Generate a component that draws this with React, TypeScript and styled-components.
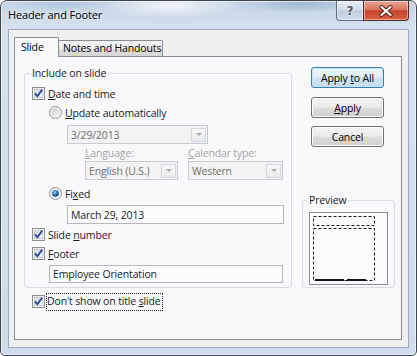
import React, { useId } from "react";
import styled, { createGlobalStyle } from "styled-components";

const FONT = `"Open Sans", "Noto Sans", "DejaVu Sans", sans-serif`;

const GlobalStyle = createGlobalStyle`
  html, body { margin: 0; padding: 0; background: #ffffff; }
  #root { width: 417px; height: 356px; }
  *, *::before, *::after { box-sizing: border-box; }
`;

const Window = styled.div`
  width: 417px;
  height: 356px;
  display: flex;
  flex-direction: column;
  padding: 0 7px 7px;
  border: 1px solid #3f454c;
  border-radius: 7px 7px 5px 5px;
  overflow: hidden;
  font-family: ${FONT};
  font-size: 10.5px;
  letter-spacing: -0.15px;
  color: #1b1b1b;
  background:
    radial-gradient(ellipse 70px 12px at 170px 5px, rgba(255,255,255,0.75), rgba(255,255,255,0)),
    radial-gradient(ellipse 60px 9px at 300px 3px, rgba(120,148,182,0.45), rgba(120,148,182,0)),
    radial-gradient(ellipse 50px 10px at 60px 2px, rgba(150,175,205,0.4), rgba(150,175,205,0)),
    linear-gradient(180deg, #c4d4e5 0px, #d5e1ee 28px, #cfdceb 100%);
  box-shadow: inset 0 0 0 1px rgba(255,255,255,0.55);
`;

const TitleBar = styled.div`
  height: 28px;
  flex: none;
  display: flex;
  align-items: flex-start;
`;

const Title = styled.div`
  flex: 1;
  line-height: 28px;
  font-size: 11px;
  color: #000;
  text-shadow: 0 0 6px rgba(255,255,255,0.9);
`;

const CaptionGroup = styled.div`
  display: flex;
`;

const CaptionButton = styled.div<{ $variant: "help" | "close" }>`
  height: 20px;
  width: ${(p) => (p.$variant === "help" ? "27px" : "46px")};
  display: flex;
  align-items: center;
  justify-content: center;
  border: 1px solid ${(p) => (p.$variant === "help" ? "#5f6f82" : "#5a2820")};
  border-top: none;
  ${(p) => (p.$variant === "help" ? "border-right: none;" : "")}
  border-radius: ${(p) => (p.$variant === "help" ? "0 0 0 4px" : "0 0 4px 0")};
  background: ${(p) =>
    p.$variant === "help"
      ? "linear-gradient(180deg, #e6edf5 0%, #d0dbe7 48%, #bccbdc 52%, #d2dfeb 100%)"
      : "linear-gradient(180deg, #eba796 0%, #d9725e 46%, #c4432d 52%, #d8613f 100%)"};
  box-shadow: inset 0 0 0 1px rgba(255,255,255,0.45);
`;

const HelpGlyph = styled.span`
  font-family: "DejaVu Sans", sans-serif;
  font-weight: bold;
  font-size: 12px;
  line-height: 1;
  color: #4b5566;
  text-shadow: 0 0 2px #fff, 0 0 1px #fff;
`;

const Client = styled.div`
  flex: 1;
  display: flex;
  flex-direction: column;
  border: 1px solid #9aabbd;
  background: #f0f0f0;
  padding: 7px 6px 7px 5px;
`;

const TabRow = styled.div`
  height: 19px;
  flex: none;
  display: flex;
  align-items: flex-end;
`;

const Tab = styled.div<{ $active?: boolean; $width: number }>`
  position: relative;
  width: ${(p) => p.$width}px;
  height: ${(p) => (p.$active ? 20 : 16)}px;
  margin-bottom: ${(p) => (p.$active ? -1 : 0)}px;
  margin-left: ${(p) => (p.$active ? 0 : -1)}px;
  z-index: ${(p) => (p.$active ? 1 : 0)};
  padding-left: ${(p) => (p.$active ? 6 : 4)}px;
  line-height: ${(p) => (p.$active ? 19 : 15)}px;
  white-space: nowrap;
  border: 1px solid #898c95;
  border-bottom: none;
  border-radius: 2px 2px 0 0;
  color: #000;
  background: ${(p) =>
    p.$active ? "#f9f9fb" : "linear-gradient(180deg, #f3f3f3 0%, #ebebeb 50%, #dedede 52%, #d6d6d6 100%)"};
`;

const Panel = styled.div`
  flex: 1;
  display: grid;
  grid-template-columns: 268px 93px;
  column-gap: 10px;
  align-items: start;
  padding: 9px 0 0 9px;
  border: 1px solid #898c95;
  background: #f9f9fb;
`;

const LeftColumn = styled.div`
  display: flex;
  flex-direction: column;
`;

const RightColumn = styled.div`
  display: flex;
  flex-direction: column;
  padding-top: 1px;
`;

const Group = styled.fieldset`
  margin: 0;
  padding: 0;
  min-width: 0;
  border: 1px solid #d5dee6;
  border-radius: 3px;
`;

const GroupLegend = styled.legend<{ $offset: number }>`
  margin-left: ${(p) => p.$offset}px;
  padding: 0 2px;
  line-height: 15px;
  color: #1b1b1b;
`;

const GroupBody = styled.div<{ $pad: string }>`
  display: flex;
  flex-direction: column;
  padding: ${(p) => p.$pad};
`;

const OptionRow = styled.div<{ $indent?: number; $top?: number }>`
  display: flex;
  align-items: center;
  height: 19px;
  margin-left: ${(p) => p.$indent ?? 0}px;
  margin-top: ${(p) => p.$top ?? 0}px;
  gap: 3px;
  color: #1b1b1b;
  white-space: nowrap;
`;

const FocusText = styled.span`
  outline: 1px dotted #222;
  outline-offset: 0;
  padding: 0 1px 1px 0;
  margin-left: -1px;
  line-height: 15px;
`;

const FieldLabels = styled.div`
  display: flex;
  height: 17px;
  align-items: center;
  margin-left: 53px;
  color: #a3a3a3;
`;

const FieldLabel = styled.span<{ $width: number }>`
  width: ${(p) => p.$width}px;
  white-space: nowrap;
`;

const ComboRow = styled.div`
  display: flex;
  gap: 10px;
  margin-left: 53px;
`;

const Combo = styled.div<{ $width: number; $indent?: number; $top?: number }>`
  width: ${(p) => p.$width}px;
  height: 19px;
  margin-left: ${(p) => p.$indent ?? 0}px;
  margin-top: ${(p) => p.$top ?? 0}px;
  display: flex;
  align-items: center;
  padding-left: 3px;
  border: 1px solid #c4cbd4;
  background: #f3f3f4;
  color: #6f6f6f;
  white-space: nowrap;
`;

const DropButton = styled.div`
  margin-left: auto;
  margin-right: 1px;
  width: 15px;
  height: 14px;
  display: flex;
  align-items: center;
  justify-content: center;
  border: 1px solid #d2d7de;
  background: linear-gradient(180deg, #f7f7f7, #ebebeb);
`;

const Triangle = styled.span`
  width: 0;
  height: 0;
  border-left: 3px solid transparent;
  border-right: 3px solid transparent;
  border-top: 3px solid #a9a9a9;
`;

const TextBox = styled.div<{ $width: number; $indent: number; $top: number; $height?: number }>`
  width: ${(p) => p.$width}px;
  height: ${(p) => p.$height ?? 19}px;
  margin-left: ${(p) => p.$indent}px;
  margin-top: ${(p) => p.$top}px;
  display: flex;
  align-items: center;
  padding-left: 3px;
  border: 1px solid #b4b8be;
  background: #fcfcfd;
  color: #1b1b1b;
  white-space: nowrap;
`;

const PushButton = styled.button<{ $default?: boolean; $top: number }>`
  width: 73px;
  height: 21px;
  margin: ${(p) => p.$top}px 0 0 9px;
  padding: 0;
  font-family: ${FONT};
  font-size: 10.5px;
  letter-spacing: -0.15px;
  color: #000;
  border: 1px solid ${(p) => (p.$default ? "#3c7fb1" : "#707070")};
  border-radius: 3px;
  background: ${(p) =>
    p.$default
      ? "linear-gradient(180deg, #eef6fc 0%, #e2eef8 48%, #d0e4f3 52%, #c4dcef 100%)"
      : "linear-gradient(180deg, #f3f3f3 0%, #ebebeb 48%, #dddddd 52%, #cfcfcf 100%)"};
  box-shadow: inset 0 0 0 1px ${(p) => (p.$default ? "#bfe6fb" : "#fbfbfb")};
`;

const PreviewGroup = styled(Group)`
  margin-top: 46px;
`;

const SlideBox = styled.div`
  width: 79px;
  height: 73px;
  border: 1px solid #8a8a8a;
  background: #fbfbfe;
`;

function CheckBox() {
  const id = useId().replace(/:/g, "");
  return (
    <svg width="13" height="13" viewBox="0 0 13 13" style={{ flex: "none" }}>
      <defs>
        <linearGradient id={`cb${id}`} x1="0" y1="0" x2="1" y2="1">
          <stop offset="0" stopColor="#d6d8dc" />
          <stop offset="1" stopColor="#fafafa" />
        </linearGradient>
      </defs>
      <rect x="0.5" y="0.5" width="12" height="12" fill="#f5f5f5" stroke="#8e8f8f" />
      <rect x="2.5" y="2.5" width="8" height="8" fill={`url(#cb${id})`} stroke="#c9ccd1" />
      <path d="M3 6.3 L5.4 9.3 L10.2 2.6" fill="none" stroke="#2b4ea4" strokeWidth="1.9" />
    </svg>
  );
}

function Radio({ checked }: { checked?: boolean }) {
  const id = useId().replace(/:/g, "");
  return (
    <svg width="13" height="13" viewBox="0 0 13 13" style={{ flex: "none" }}>
      <defs>
        <linearGradient id={`ro${id}`} x1="0" y1="0" x2="1" y2="1">
          <stop offset="0" stopColor="#c9cbcf" />
          <stop offset="1" stopColor="#f8f8f8" />
        </linearGradient>
        <radialGradient id={`rd${id}`} cx="0.4" cy="0.35" r="0.7">
          <stop offset="0" stopColor="#9fd8ff" />
          <stop offset="0.45" stopColor="#2d7fc4" />
          <stop offset="1" stopColor="#0f2c52" />
        </radialGradient>
      </defs>
      <circle cx="6.5" cy="6.5" r="6" fill="#f4f4f4" stroke="#8c8e90" />
      <circle cx="6.5" cy="6.5" r="4.3" fill={`url(#ro${id})`} />
      {checked && <circle cx="6.5" cy="6.5" r="3.3" fill={`url(#rd${id})`} />}
    </svg>
  );
}

function CloseGlyph() {
  return (
    <svg width="16" height="12" viewBox="0 0 16 12">
      <path d="M3.5 2 L12.5 10 M12.5 2 L3.5 10" stroke="#4a1d16" strokeWidth="4" strokeLinecap="round" />
      <path d="M3.5 2 L12.5 10 M12.5 2 L3.5 10" stroke="#ffffff" strokeWidth="2.2" strokeLinecap="round" />
    </svg>
  );
}

function SlidePreview() {
  return (
    <svg width="77" height="71" viewBox="0 0 77 71">
      <rect x="3.5" y="3.5" width="61" height="9" fill="none" stroke="#1d1d1d" strokeDasharray="3 2" />
      <rect x="3.5" y="15.5" width="61" height="52" fill="none" stroke="#1d1d1d" strokeDasharray="3 2" />
      <path d="M5 67 H34 M37 67 H56" stroke="#111" strokeWidth="2" />
    </svg>
  );
}

function Combobox({ width, text, indent, top }: { width: number; text: string; indent?: number; top?: number }) {
  return (
    <Combo $width={width} $indent={indent} $top={top}>
      {text}
      <DropButton>
        <Triangle />
      </DropButton>
    </Combo>
  );
}

export default function App() {
  return (
    <>
      <GlobalStyle />
      <Window>
        <TitleBar>
          <Title>Header and Footer</Title>
          <CaptionGroup>
            <CaptionButton $variant="help">
              <HelpGlyph>?</HelpGlyph>
            </CaptionButton>
            <CaptionButton $variant="close">
              <CloseGlyph />
            </CaptionButton>
          </CaptionGroup>
        </TitleBar>
        <Client>
          <TabRow>
            <Tab $active $width={45}>Slide</Tab>
            <Tab $width={105}>Notes and Handouts</Tab>
          </TabRow>
          <Panel>
            <LeftColumn>
              <Group>
                <GroupLegend $offset={5}>Include on slide</GroupLegend>
                <GroupBody $pad="3px 0 4px 7px">
                  <OptionRow>
                    <CheckBox />
                    <span><u>D</u>ate and time</span>
                  </OptionRow>
                  <OptionRow $indent={17}>
                    <Radio />
                    <span><u>U</u>pdate automatically</span>
                  </OptionRow>
                  <Combobox width={141} text="3/29/2013" indent={35} top={3} />
                  <FieldLabels>
                    <FieldLabel $width={103}><u>L</u>anguage:</FieldLabel>
                    <FieldLabel $width={100}><u>C</u>alendar type:</FieldLabel>
                  </FieldLabels>
                  <ComboRow>
                    <Combobox width={93} text="English (U.S.)" />
                    <Combobox width={95} text="Western" />
                  </ComboRow>
                  <OptionRow $indent={17} $top={4}>
                    <Radio checked />
                    <span>Fi<u>x</u>ed</span>
                  </OptionRow>
                  <TextBox $width={217} $indent={35} $top={2}>March 29, 2013</TextBox>
                  <OptionRow $top={1}>
                    <CheckBox />
                    <span>Slide <u>n</u>umber</span>
                  </OptionRow>
                  <OptionRow>
                    <CheckBox />
                    <span><u>F</u>ooter</span>
                  </OptionRow>
                  <TextBox $width={234} $indent={17} $top={2} $height={18}>Employee Orientation</TextBox>
                </GroupBody>
              </Group>
              <OptionRow $indent={8} $top={4}>
                <CheckBox />
                <FocusText>Don't show on title <u>s</u>lide</FocusText>
              </OptionRow>
            </LeftColumn>
            <RightColumn>
              <PushButton $default $top={0}>Apply <u>t</u>o All</PushButton>
              <PushButton $top={9}><u>A</u>pply</PushButton>
              <PushButton $top={8}>Cancel</PushButton>
              <PreviewGroup>
                <GroupLegend $offset={4}>Preview</GroupLegend>
                <GroupBody $pad="4px 0 2px 6px">
                  <SlideBox>
                    <SlidePreview />
                  </SlideBox>
                </GroupBody>
              </PreviewGroup>
            </RightColumn>
          </Panel>
        </Client>
      </Window>
    </>
  );
}
